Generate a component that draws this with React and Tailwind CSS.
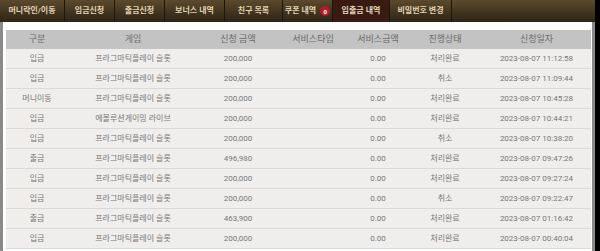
import React from 'react';

const tabs = [
  { label: '머니락인/이동', w: 'w-[65px]' },
  { label: '입금신청', w: 'w-[50px]' },
  { label: '출금신청', w: 'w-[50px]' },
  { label: '보너스 내역', w: 'w-[60px]' },
  { label: '친구 목록', w: 'w-[58px]' },
  { label: '쿠폰 내역', w: 'w-[50px]', badge: '0' },
  { label: '입출금 내역', w: 'w-[57px]', active: true },
  { label: '비밀번호 변경', w: 'w-[62px]' },
];

const rows = [
  ['입금', '프라그마틱플레이 슬롯', '200,000', '0.00', '처리완료', '2023-08-07 11:12:58'],
  ['입금', '프라그마틱플레이 슬롯', '200,000', '0.00', '취소', '2023-08-07 11:09:44'],
  ['머니이동', '프라그마틱플레이 슬롯', '200,000', '0.00', '처리완료', '2023-08-07 10:45:28'],
  ['입금', '에볼루션게이밍 라이브', '200,000', '0.00', '처리완료', '2023-08-07 10:44:21'],
  ['입금', '프라그마틱플레이 슬롯', '200,000', '0.00', '취소', '2023-08-07 10:38:20'],
  ['출금', '프라그마틱플레이 슬롯', '496,980', '0.00', '처리완료', '2023-08-07 09:47:26'],
  ['입금', '프라그마틱플레이 슬롯', '200,000', '0.00', '처리완료', '2023-08-07 09:27:24'],
  ['입금', '프라그마틱플레이 슬롯', '200,000', '0.00', '취소', '2023-08-07 09:22:47'],
  ['출금', '프라그마틱플레이 슬롯', '463,900', '0.00', '처리완료', '2023-08-07 01:16:42'],
  ['입금', '프라그마틱플레이 슬롯', '200,000', '0.00', '처리완료', '2023-08-07 00:40:04'],
];

const cols = ['w-[62px]', 'w-[130px]', 'w-[80px]', 'w-[70px]', 'w-[60px]', 'w-[74px]', 'flex-1'];
const heads = ['구분', '게임', '신청 금액', '서비스타입', '서비스금액', '진행상태', '신청일자'];

export default function App() {
  return (
    <div className="w-[600px] h-[251px] overflow-hidden bg-black" style={{ fontFamily: "Roboto, 'Noto Sans CJK KR', sans-serif" }}>
      <div className="w-[595px] h-full bg-white flex flex-col">
        {/* Tabs */}
        <div className="h-[22px] flex bg-gradient-to-b from-[#5b4a2d] to-[#2e2414] shrink-0">
          {tabs.map((t) => (
            <div
              key={t.label}
              className={`${t.w} h-full flex items-center justify-center gap-1 border-r border-[#1e1709] text-[8px] font-bold ${
                t.active ? 'bg-[#3a1b12] text-[#e4d6c0]' : 'text-[#e2d3b4]'
              }`}
            >
              <span>{t.label}</span>
              {t.badge && (
                <span className="w-[10px] h-[10px] rounded-full bg-[#b51b2a] text-white text-[6px] flex items-center justify-center">
                  {t.badge}
                </span>
              )}
            </div>
          ))}
        </div>

        {/* Table */}
        <div className="flex-1 border-l-[3px] border-r-[3px] border-[#8a8a8a] pt-[8px] pl-[3px] pr-[1px]">
          <div className="flex h-[19px] bg-[#c3c3c3] text-[9px] text-[#6b6b6b] items-center">
            {heads.map((h, i) => (
              <div key={h} className={`${cols[i]} text-center`}>{h}</div>
            ))}
          </div>
          {rows.map((r, idx) => (
            <div key={idx} className="flex h-[20px] bg-[#efeeec] border-b border-[#dcdad7] text-[8px] text-[#777] items-center">
              <div className={`${cols[0]} text-center`}>{r[0]}</div>
              <div className={`${cols[1]} text-center`}>{r[1]}</div>
              <div className={`${cols[2]} text-center`}>{r[2]}</div>
              <div className={`${cols[3]} text-center`}></div>
              <div className={`${cols[4]} text-center`}>{r[3]}</div>
              <div className={`${cols[5]} text-center`}>{r[4]}</div>
              <div className={`${cols[6]} text-center`}>{r[5]}</div>
            </div>
          ))}
        </div>
      </div>
    </div>
  );
}
